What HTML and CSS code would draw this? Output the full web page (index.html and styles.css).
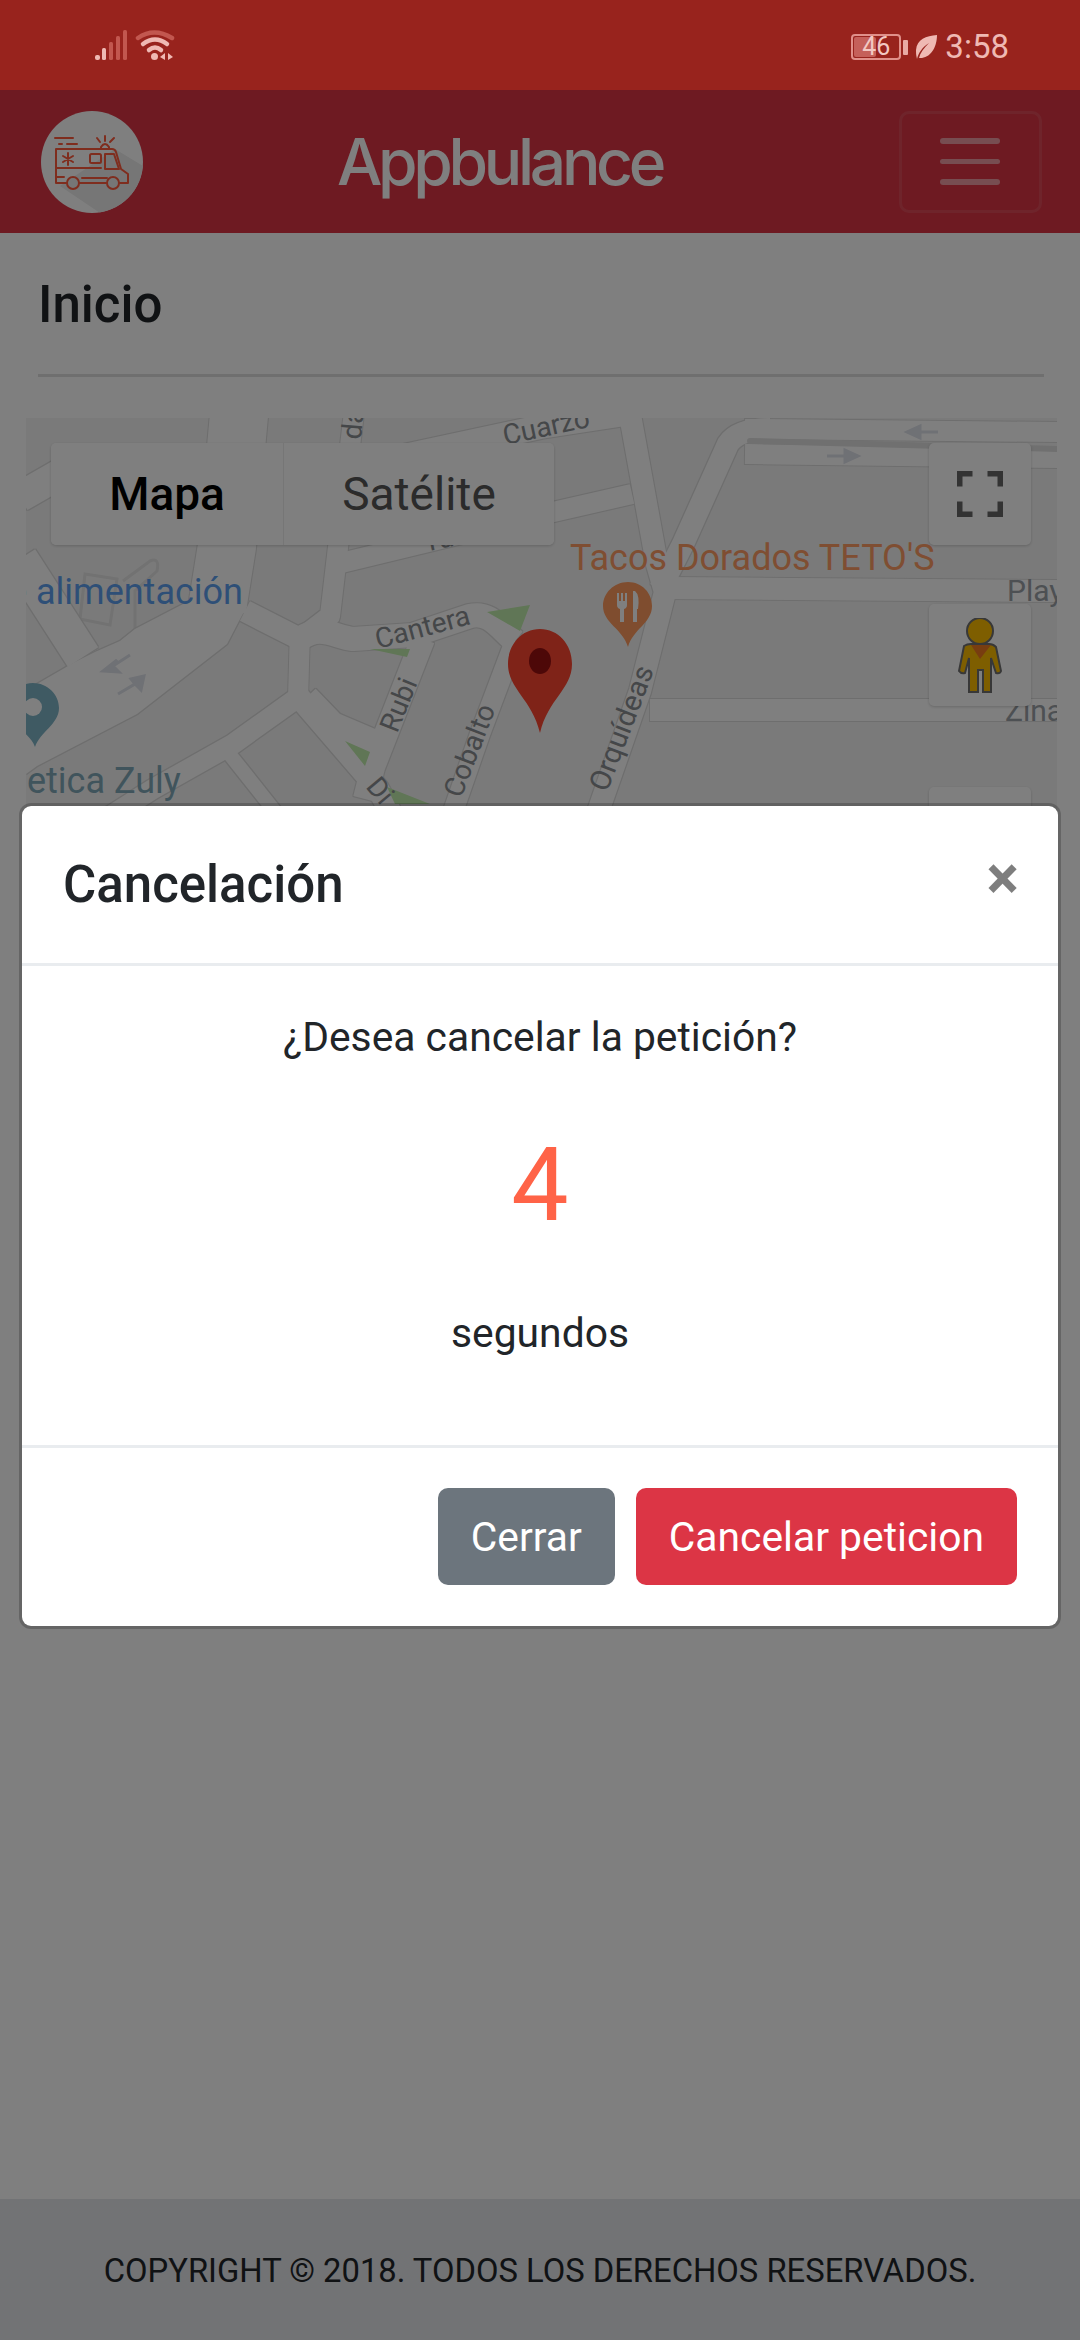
FILE: index.html
```html
<!DOCTYPE html>
<html lang="es">
<head>
<meta charset="utf-8">
<title>Appbulance</title>
<link rel="stylesheet" href="styles.css">
</head>
<body>
<div class="phone">
  <div class="statusbar">
    <div class="status-left">
      <svg class="status-icons" width="130" height="34" viewBox="95 28 130 34">
        <rect class="st-on" x="95" y="55" width="5" height="5" rx="2"/>
        <rect class="st-on" x="102" y="48" width="4" height="12" rx="1.5"/>
        <rect class="st-off" x="109" y="42" width="4" height="18" rx="1.5"/>
        <rect class="st-off" x="116" y="36" width="4" height="24" rx="1.5"/>
        <rect class="st-off" x="123" y="30" width="4" height="30" rx="1.5"/>
        <path class="arc-off" d="M138 38 Q154 27 172 38"/>
        <path class="arc-on" d="M143 44 Q155 35 167 44"/>
        <path class="arc-on" d="M149 50 Q155 45 161 50"/>
        <circle class="st-on" cx="154.500" cy="56.500" r="3.500"/>
        <path class="st-on" d="M160 57 L165 53 V60 Z M168 53 L173 57 L168 60 Z"/>
      </svg>
    </div>
    <div class="status-right">
      <div class="battery"><span class="battery-level"></span><span class="battery-text">46</span></div>
      <span class="battery-nub"></span>
      <svg class="leaf" width="24" height="26" viewBox="0 0 24 26"><path class="st-on" d="M23 1 C12 2 3 5 2 16 C2 19 2 21 3 25 C4 20 8 13 15 9 C10 14 6 19 5 24 C15 25 23 15 23 1 Z"/></svg>
      <span class="clock">3:58</span>
    </div>
  </div>

  <div class="app">
    <header class="navbar">
      <svg class="logo" width="102" height="102" viewBox="41 110 102 102">
        <defs><clipPath id="logo-clip"><circle cx="92" cy="161" r="51"/></clipPath></defs>
        <circle cx="92" cy="161" r="51" fill="#fff"/>
        <path clip-path="url(#logo-clip)" fill="#ececec" d="M115 148 L143 165 V212 H100 L60 185 Z"/>
        <g class="amb">
          <path d="M55 137 H73 M59 143 H62 M67 143 H77"/>
          <path d="M56 167 V148 H112 Q115 148 116 151 L121 168 L128 173 V182 H120 M106 182 H80 M66 182 H56 V167 H101"/>
          <rect x="90" y="153" width="11" height="9" rx="1.500"/>
          <path d="M105 168 V153 H114 L119 168 Z"/>
          <circle cx="73" cy="182" r="6"/>
          <circle cx="113" cy="182" r="6"/>
          <path d="M82 177 H107 M56 176 H64"/>
          <path d="M68 152 V164 M63 155 L73 161 M73 155 L63 161"/>
          <path d="M101 148 V146 Q105 140 109 146 V148 M105 135 V140 M97 137 L100 141 M114 137 L110 141"/>
        </g>
      </svg>
      <span class="brand">Appbulance</span>
      <button class="toggler" type="button" aria-label="Menu">
        <span class="bar"></span><span class="bar"></span><span class="bar"></span>
      </button>
    </header>

    <main class="content">
      <h2 class="page-title">Inicio</h2>
      <div class="rule"></div>
      <div class="map">
        <svg class="map-canvas" width="1031" height="800" viewBox="26 419 1031 800">
          <defs>
            <filter id="casing" x="-5%" y="-5%" width="110%" height="110%">
              <feMorphology in="SourceAlpha" operator="dilate" radius="1.4" result="fat"/>
              <feFlood flood-color="#dcdcdc"/>
              <feComposite in2="fat" operator="in" result="edge"/>
              <feMerge><feMergeNode in="edge"/><feMergeNode in="SourceGraphic"/></feMerge>
              <feGaussianBlur stdDeviation="0.7"/>
            </filter>
          </defs>
          <rect x="26" y="419" width="1031" height="800" fill="#f5f5f5"/>
          <path class="thin" d="M85 575 L117 580 L110 626 L80 620 Z"/>
          <path class="thin" d="M123 582 L150 562 Q160 558 157 572 L135 592 L135 630"/>
          <g filter="url(#casing)">
            <polygon fill="#fff" points="247,607 187,603 135,630 120,642 95,653 75,663 37,685 26,692 26,775 37,767 137,715 227,645 240,620"/>
            <g class="roads">
              <path class="w22" d="M628 405 L657 565 L665 593 L640 692 L592 830"/>
              <path class="w22" d="M770 430 Q738 430 728 445 L683 545 L660 590"/>
              <path class="w20" d="M745 430 L1060 433"/>
              <path class="w20" d="M745 455 L1060 459"/>
              <path class="w22" d="M665 589 L1060 592"/>
              <path class="w22" d="M650 711 L1060 711"/>
              <path class="w20" d="M337 565 L540 516 L632 495"/>
              <path class="w24" d="M400 458 L540 428 L625 415"/>
              <path class="w24" d="M300 640 C320 625 335 638 353 640 L413 636 L470 617 C490 612 500 630 515 642"/>
              <path class="w20" d="M515 642 L480 735 L447 830"/>
              <path class="w24" d="M423 640 L373 768 L365 800"/>
              <path class="w20" d="M300 630 L298 700"/>
              <path class="w24" d="M307 698 L333 725 L380 745"/>
              <path class="w22" d="M298 697 L378 790 L400 830"/>
              <path class="w20" d="M300 697 L233 745 L153 790 L90 830"/>
              <path class="w22" d="M300 640 L245 612"/>
              <path class="w58" d="M240 405 L227 547 L217 610"/>
              <path class="w20" d="M355 405 L337 557 L330 617 L300 640"/>
              <path class="w30" d="M20 498 L60 475"/>
              <path class="w36" d="M20 560 L83 658"/>
              <path class="w14" d="M227 752 L285 825"/>
            </g>
          </g>
          <path class="median" d="M750 442 L1060 450"/>
          <path class="arrow" d="M938 433 H920 V427 L907 433 L920 439 V433 Z M827 457 H845 V451 L858 457 L845 463 V457 Z M130 656 L113 667 L117 661 L103 672 L119 673 L113 667 Z M118 695 L135 685 L131 680 L144 677 L141 691 L135 685 Z"/>
          <g class="park">
            <polygon points="487,613 530,606 520,632"/>
            <polygon points="370,650 410,650 407,658"/>
            <polygon points="345,742 370,753 365,767"/>
            <polygon points="387,788 430,805 395,805"/>
          </g>
          <text class="lbl" transform="translate(505 446) rotate(-12)">Cuarzo</text>
          <text class="lbl" transform="translate(361 441) rotate(-85)">da</text>
          <text class="lbl" transform="translate(425 553) rotate(-12)">Tu</text>
          <text class="lbl" transform="translate(378 650) rotate(-15)">Cantera</text>
          <text class="lbl" transform="translate(397 735) rotate(-68)">Rubi</text>
          <text class="lbl" transform="translate(461 800) rotate(-69)">Cobalto</text>
          <text class="lbl lbl-wide" transform="translate(607 794) rotate(-69)">Orquídeas</text>
          <text class="lbl" transform="translate(365 788) rotate(50)">Di</text>
          <text class="lbl-lg" x="1007" y="602">Play</text>
          <text class="lbl-lg" x="1005" y="722">Zina</text>
          <text class="poi-blue" x="243" y="605" text-anchor="end">e alimentación</text>
          <text class="poi-orange" x="570" y="571">Tacos Dorados TETO'S</text>
          <text class="poi-teal" x="27" y="794">etica Zuly</text>
          <path class="pin-teal" d="M33 684 C47 684 59 695 59 709 C59 725 40 733 35 748 C30 733 7 725 7 709 C7 695 19 684 33 684 Z"/>
          <circle cx="33" cy="708" r="9" fill="#fff"/>
          <path class="pin-orange" d="M628 583 C642 583 652 594 652 607 C652 624 633 630 628 648 C623 630 603 624 603 607 C603 594 614 583 628 583 Z"/>
          <path class="pin-fork" d="M617 594 H619 V602 H621 V594 H623 V602 H625 V594 H627 V606 Q627 609 624 610 V623 H620 V610 Q617 609 617 606 Z M635 592 Q640 596 638 610 H637 V623 H633 V592 Z"/>
          <path class="pin-red" d="M540 630 C522 630 508 645 508 665 C508 690 532 700 540 734 C548 700 572 690 572 665 C572 645 558 630 540 630 Z"/>
          <ellipse class="pin-dot" cx="540" cy="662" rx="11" ry="13"/>
        </svg>
        <div class="map-type">
          <button class="map-btn active" type="button">Mapa</button>
          <button class="map-btn" type="button">Satélite</button>
        </div>
        <div class="map-tools">
          <div class="map-tool">
            <svg width="46" height="46" viewBox="0 0 46 46"><path class="fs" d="M2.750 15.500 V2.750 H15.500 M30.500 2.750 H43.250 V15.500 M2.750 30.500 V43.250 H15.500 M30.500 43.250 H43.250 V30.500"/></svg>
          </div>
          <div class="map-tool">
            <svg width="44" height="75" viewBox="957 618 44 75">
              <circle class="peg" cx="979" cy="631" r="13"/>
              <path class="peg" d="M963 646 Q966 644 970 644 L988 644 Q992 644 995 647 L1000 671 Q999 674 995 673 L990 658 L990 692 L982 692 L982 670 L977 670 L977 692 L968 692 L968 658 L964 673 Q960 674 958 671 Z"/>
              <polygon class="peg-collar" points="970,645 990,645 979,659"/>
            </svg>
          </div>
          <div class="map-tool map-tool-gap"></div>
        </div>
      </div>
    </main>

    <footer class="footer">COPYRIGHT © 2018. TODOS LOS DERECHOS RESERVADOS.</footer>

    <div class="backdrop">
      <div class="modal">
        <div class="modal-header">
          <h5 class="modal-title">Cancelación</h5>
          <span class="close">×</span>
        </div>
        <div class="modal-body">
          <p class="para">¿Desea cancelar la petición?</p>
          <h1 class="count">4</h1>
          <p class="para">segundos</p>
        </div>
        <div class="modal-footer">
          <button class="btn btn-grey" type="button">Cerrar</button>
          <button class="btn btn-red" type="button">Cancelar peticion</button>
        </div>
      </div>
    </div>
  </div>
</div>
</body>
</html>
```
FILE: styles.css
```css
* { box-sizing: border-box; }
html, body { margin: 0; padding: 0; }
body { font-family: Roboto, "Liberation Sans", sans-serif; color: #212529; background: #fff; }
button { font-family: inherit; cursor: pointer; }

.phone { width: 1080px; height: 2340px; display: flex; flex-direction: column; overflow: hidden; }

/* Status bar */
.statusbar { height: 90px; flex: none; background: #98231d; display: flex; justify-content: space-between; align-items: flex-start; padding: 28px 71px 0 95px; }
.status-left { display: flex; }
.status-icons { display: block; }
.st-on { fill: #efb9b3; }
.st-off { fill: #c2574f; }
.arc-on, .arc-off { fill: none; stroke-width: 4.500px; stroke-linecap: round; }
.arc-on { stroke: #efb9b3; }
.arc-off { stroke: #c2574f; }
.status-right { display: flex; align-items: center; height: 34px; margin-top: 2px; }
.battery { position: relative; width: 50px; height: 26px; border: 2px solid #e0908a; border-radius: 4px; display: flex; align-items: center; justify-content: center; }
.battery-level { position: absolute; left: 1px; top: 1px; bottom: 1px; width: 22px; background: #c5605a; border-radius: 2px; }
.battery-text { position: relative; font-size: 25px; line-height: 26px; color: #f2c8c3; }
.battery-nub { width: 5px; height: 15px; margin-left: 2px; background: #e8aaa4; border-radius: 1px; }
.leaf { margin-left: 6px; }
.clock { margin-left: 7px; font-size: 33px; line-height: 34px; color: #efb9b3; }

/* App */
.app { position: relative; flex: 1; display: flex; flex-direction: column; min-height: 0; }
.navbar { height: 143px; flex: none; background: #dc3545; display: flex; align-items: center; justify-content: space-between; padding: 0 38px 0 41px; }
.logo { display: block; flex: none; }
.amb { fill: none; stroke: #ff5a3c; stroke-width: 2px; stroke-linejoin: round; stroke-linecap: round; }
.brand { font-family: Inter, Roboto, sans-serif; font-weight: 500; font-size: 64px; line-height: 80px; letter-spacing: -4.300px; color: #fff; margin-right: 43px; }
.toggler { width: 143px; height: 102px; background: transparent; border: 3px solid rgba(255,255,255,.1); border-radius: 10px; display: flex; flex-direction: column; align-items: center; justify-content: center; gap: 15px; padding: 0; }
.bar { width: 60px; height: 5.500px; border-radius: 3px; background: rgba(255,255,255,.5); }

.content { flex: 1; min-height: 0; background: #fff; overflow: hidden; }
.page-title { margin: 34px 38px 31px; font-size: 51px; line-height: 76px; font-weight: 500; color: #212529; }
.rule { height: 3px; margin: 0 36px 41px 38px; background: #dedede; }

/* Map */
.map { position: relative; height: 800px; margin: 0 23px 0 26px; overflow: hidden; background: #f5f5f5; }
.map-canvas { display: block; }
.roads path { fill: none; stroke: #fff; stroke-linejoin: round; stroke-linecap: butt; }
.w14 { stroke-width: 14px; }
.w20 { stroke-width: 20px; }
.w22 { stroke-width: 22px; }
.w24 { stroke-width: 24px; }
.w30 { stroke-width: 30px; }
.w36 { stroke-width: 36px; }
.w58 { stroke-width: 58px; }
.thin { fill: none; stroke: #e4e4e4; stroke-width: 3px; }
.median { fill: none; stroke: #e0e0e0; stroke-width: 6px; stroke-linecap: round; }
.arrow { fill: #dfe2ea; stroke: #dfe2ea; stroke-width: 3px; }
.park polygon { fill: #c0ecac; }
.lbl { font-size: 28px; fill: #8a8e92; font-family: Roboto, sans-serif; }
.lbl-wide { font-size: 29px; }
.lbl-lg { font-size: 30px; fill: #9aa0a6; font-family: Roboto, sans-serif; }
.poi-blue { font-size: 36px; fill: #5d9fee; font-family: Roboto, sans-serif; }
.poi-orange { font-size: 36px; fill: #ff9c64; font-family: Roboto, sans-serif; }
.poi-teal { font-size: 36px; fill: #80a8b8; font-family: Roboto, sans-serif; }
.pin-teal { fill: #7fb4c6; }
.pin-orange { fill: #ff9a5e; }
.pin-fork { fill: #fff; }
.pin-red { fill: #fe4630; }
.pin-dot { fill: #9a1010; }

.map-type { position: absolute; left: 25px; top: 25px; display: flex; border-radius: 5px; overflow: hidden; box-shadow: 0 1px 3px rgba(0,0,0,.18); }
.map-btn { height: 102px; border: 0; background: #fff; font-size: 46px; color: #565656; padding: 0; width: 270px; }
.map-btn.active { width: 233px; color: #000; font-weight: 500; border-right: 1px solid #ececec; }
.map-tools { position: absolute; left: 903px; top: 25px; display: flex; flex-direction: column; gap: 59px; }
.map-tool { width: 102px; height: 102px; background: #fff; border-radius: 5px; box-shadow: 0 1px 3px rgba(0,0,0,.18); display: flex; align-items: center; justify-content: center; }
.map-tool-gap { margin-top: 22px; }
.fs { fill: none; stroke: #666; stroke-width: 5.500px; }
.peg { fill: #fdbd00; stroke: #707070; stroke-width: 2px; }
.peg-collar { fill: #f07a20; }

.footer { height: 141px; flex: none; background: #e5e6ea; display: flex; align-items: center; justify-content: center; padding-top: 2px; font-size: 32.750px; color: #212529; }

/* Modal */
.backdrop { position: absolute; inset: 0; background: rgba(0,0,0,.5); display: flex; justify-content: center; align-items: flex-start; padding-top: 713px; }
.modal { width: 1042px; background: #fff; background-clip: padding-box; border: 3px solid rgba(0,0,0,.2); border-radius: 12px; }
.modal-header { display: flex; align-items: flex-start; justify-content: space-between; height: 160px; padding: 41px; border-bottom: 3px solid #e9ecef; }
.modal-title { margin: 0; font-size: 51px; line-height: 76px; font-weight: 500; color: #212529; }
.close { font-size: 61px; line-height: 62px; font-weight: 700; color: #000; opacity: .5; margin-right: -2px; }
.modal-body { padding: 41px 41px 40px; text-align: center; }
.para { margin: 0 0 41px; font-size: 40.800px; line-height: 61px; color: #212529; }
.count { margin: 0 0 41px; font-size: 102px; line-height: 153px; font-weight: 400; color: #ff6347; }
.modal-footer { display: flex; justify-content: flex-end; gap: 21px; padding: 40px 41px 41px; border-top: 3px solid #e9ecef; }
.btn { height: 97px; padding: 0 33px; border: 0; border-radius: 10px; font-size: 40.800px; color: #fff; }
.btn-grey { background: #6c757d; }
.btn-red { background: #dc3545; }
```
